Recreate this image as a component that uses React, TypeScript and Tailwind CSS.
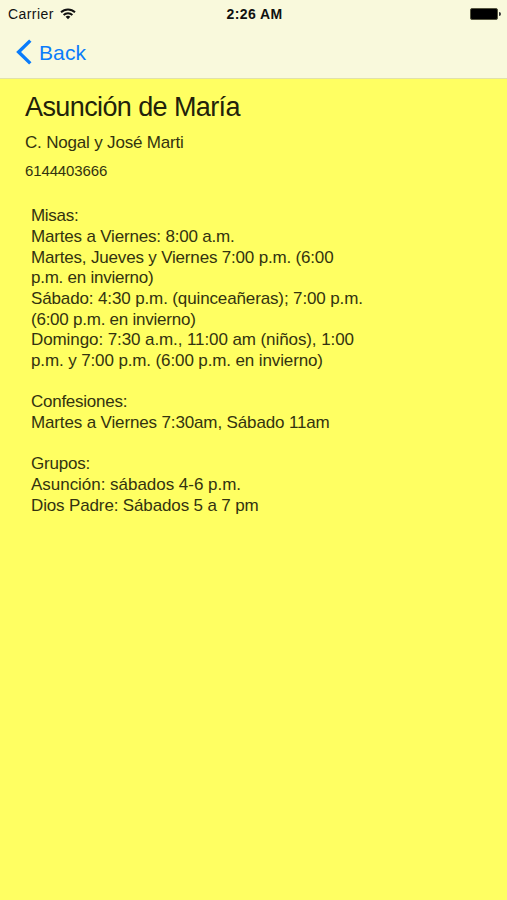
import React from 'react';

type Line = { text: string; className: string };

const schedule: Line[] = [
  { text: 'Misas:', className: 'tracking-[-0.3px]' },
  { text: 'Martes a Viernes: 8:00 a.m.', className: 'tracking-[-0.18px]' },
  { text: 'Martes, Jueves y Viernes 7:00 p.m. (6:00', className: 'tracking-[-0.18px]' },
  { text: 'p.m. en invierno)', className: 'tracking-[-0.25px]' },
  { text: 'Sábado: 4:30 p.m. (quinceañeras); 7:00 p.m.', className: 'tracking-[-0.13px]' },
  { text: '(6:00 p.m. en invierno)', className: 'tracking-[-0.24px]' },
  { text: 'Domingo: 7:30 a.m., 11:00 am (niños), 1:00', className: 'tracking-[-0.09px]' },
  { text: 'p.m. y 7:00 p.m. (6:00 p.m. en invierno)', className: 'tracking-[-0.12px]' },
  { text: '', className: '' },
  { text: 'Confesiones:', className: 'tracking-[-0.26px]' },
  { text: 'Martes a Viernes 7:30am, Sábado 11am', className: 'tracking-[-0.14px]' },
  { text: '', className: '' },
  { text: 'Grupos:', className: 'tracking-[-0.2px]' },
  { text: 'Asunción: sábados 4-6 p.m.', className: 'tracking-[-0.03px]' },
  { text: 'Dios Padre: Sábados 5 a 7 pm', className: 'tracking-[-0.14px]' },
];

const WifiIcon: React.FC = () => (
  <svg width="16" height="12" viewBox="0 0 16 12" fill="none" stroke="#111" strokeWidth="1.9">
    <path d="M1 4.3a10 10 0 0 1 14 0" />
    <path d="M3.6 7a6.3 6.3 0 0 1 8.8 0" />
    <path d="M8 11.2 5.6 8.8a3.5 3.5 0 0 1 4.8 0Z" fill="#111" stroke="none" />
  </svg>
);

const StatusBar: React.FC = () => (
  <div className="grid h-7 grid-cols-3 items-center pl-2 pr-1.5 text-[#111]">
    <div className="flex items-center gap-1.5">
      <span className="text-[14px] leading-7 tracking-[0.42px]">Carrier</span>
      <WifiIcon />
    </div>
    <span className="text-center text-[14px] font-bold leading-7 tracking-[0.4px]">2:26 AM</span>
    <div className="flex items-center justify-end gap-px">
      <div className="h-3 w-7 rounded-[2px] border border-[#55553f] bg-black" />
      <div className="h-1 w-0.5 rounded-r-full bg-[#333]" />
    </div>
  </div>
);

const App: React.FC = () => {
  return (
    <div className="flex min-h-screen w-full flex-col bg-[#ffff62] font-['Liberation_Sans',Arial,sans-serif] text-[#33330f]">
      <header className="h-[79px] border-b border-[#e2e2a8] bg-[#f9f9dc]">
        <StatusBar />
        <button className="flex h-12 items-center gap-[7px] pl-4 text-[#0a7cfb]">
          <svg width="16" height="26" viewBox="0 0 16 26" fill="none" stroke="currentColor" strokeWidth="3.4">
            <path d="M14.3 1.6 2.6 13l11.7 11.4" />
          </svg>
          <span className="text-[21px] leading-none tracking-[0.1px]">Back</span>
        </button>
      </header>

      <main className="pl-[25px]">
        <h1 className="pt-3 text-[27px] leading-8 tracking-[-0.6px] text-[#22220a]">Asunción de María</h1>
        <p className="mt-2 text-[17px] leading-6 tracking-[-0.18px]">C. Nogal y José Marti</p>
        <p className="mt-1.5 text-[15px] leading-5 tracking-[-0.13px]">6144403666</p>

        <div className="mt-[25.2px] pl-1.5 text-[17px] leading-[20.7px]">
          {schedule.map((line, i) => (
            <p key={i} className="h-[20.7px] whitespace-nowrap">
              <span className={line.className}>{line.text}</span>
            </p>
          ))}
        </div>
      </main>
    </div>
  );
};

export default App;
